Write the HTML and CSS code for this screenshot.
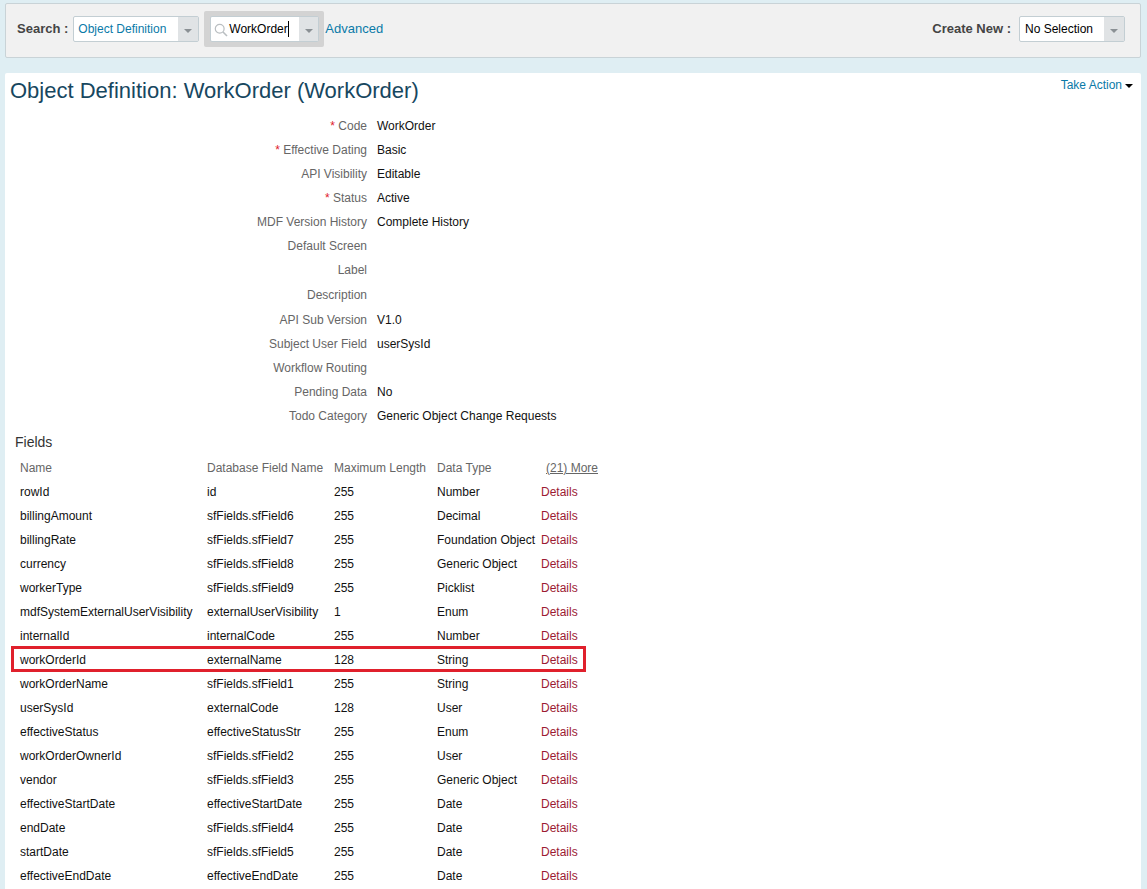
FILE: index.html
```html
<!DOCTYPE html>
<html lang="en">
<head>
<meta charset="utf-8">
<title>Object Definition: WorkOrder</title>
<link rel="stylesheet" href="styles.css">
</head>
<body>
<div class="topbar">
  <span class="bar-label">Search :</span>
  <div class="combo combo-type">
    <span class="combo-text link">Object Definition</span>
    <span class="combo-btn"><i class="caret"></i></span>
  </div>
  <div class="search-wrap">
    <div class="combo combo-search">
      <span class="combo-text search-text">
        <svg class="search-icon" width="14" height="14" viewBox="0 0 14 14"><circle cx="5.7" cy="5.7" r="4.4" fill="none" stroke="#b9bec1" stroke-width="1.2"/><path d="M9 9l4 4" stroke="#b9bec1" stroke-width="1.6" fill="none"/></svg>
        <span class="typed">WorkOrder</span>
      </span>
      <span class="combo-btn"><i class="caret"></i></span>
    </div>
  </div>
  <a class="advanced link">Advanced</a>
  <span class="bar-label create">Create New :</span>
  <div class="combo combo-new">
    <span class="combo-text">No Selection</span>
    <span class="combo-btn"><i class="caret"></i></span>
  </div>
</div>

<main class="panel">
  <div class="title-row">
    <h1>Object Definition: WorkOrder (WorkOrder)</h1>
    <a class="action link">Take Action<i class="action-caret"></i></a>
  </div>
  <dl class="props">
    <div class="prop"><dt><span class="req">*</span> Code</dt><dd>WorkOrder</dd></div>
    <div class="prop"><dt><span class="req">*</span> Effective Dating</dt><dd>Basic</dd></div>
    <div class="prop"><dt>API Visibility</dt><dd>Editable</dd></div>
    <div class="prop"><dt><span class="req">*</span> Status</dt><dd>Active</dd></div>
    <div class="prop"><dt>MDF Version History</dt><dd>Complete History</dd></div>
    <div class="prop"><dt>Default Screen</dt><dd></dd></div>
    <div class="prop"><dt>Label</dt><dd></dd></div>
    <div class="prop tall"><dt>Description</dt><dd></dd></div>
    <div class="prop tall"><dt>API Sub Version</dt><dd>V1.0</dd></div>
    <div class="prop"><dt>Subject User Field</dt><dd>userSysId</dd></div>
    <div class="prop"><dt>Workflow Routing</dt><dd></dd></div>
    <div class="prop"><dt>Pending Data</dt><dd>No</dd></div>
    <div class="prop"><dt>Todo Category</dt><dd>Generic Object Change Requests</dd></div>
  </dl>
  <h2>Fields</h2>
  <div class="fields">
    <div class="row head"><span>Name</span><span>Database Field Name</span><span>Maximum Length</span><span>Data Type</span><span class="more">(21) More</span></div>
    <div class="row"><span>rowId</span><span>id</span><span>255</span><span>Number</span><a class="details">Details</a></div>
    <div class="row"><span>billingAmount</span><span>sfFields.sfField6</span><span>255</span><span>Decimal</span><a class="details">Details</a></div>
    <div class="row"><span>billingRate</span><span>sfFields.sfField7</span><span>255</span><span>Foundation Object</span><a class="details">Details</a></div>
    <div class="row"><span>currency</span><span>sfFields.sfField8</span><span>255</span><span>Generic Object</span><a class="details">Details</a></div>
    <div class="row"><span>workerType</span><span>sfFields.sfField9</span><span>255</span><span>Picklist</span><a class="details">Details</a></div>
    <div class="row"><span>mdfSystemExternalUserVisibility</span><span>externalUserVisibility</span><span>1</span><span>Enum</span><a class="details">Details</a></div>
    <div class="row"><span>internalId</span><span>internalCode</span><span>255</span><span>Number</span><a class="details">Details</a></div>
    <div class="row marked"><span>workOrderId</span><span>externalName</span><span>128</span><span>String</span><a class="details">Details</a></div>
    <div class="row"><span>workOrderName</span><span>sfFields.sfField1</span><span>255</span><span>String</span><a class="details">Details</a></div>
    <div class="row"><span>userSysId</span><span>externalCode</span><span>128</span><span>User</span><a class="details">Details</a></div>
    <div class="row"><span>effectiveStatus</span><span>effectiveStatusStr</span><span>255</span><span>Enum</span><a class="details">Details</a></div>
    <div class="row"><span>workOrderOwnerId</span><span>sfFields.sfField2</span><span>255</span><span>User</span><a class="details">Details</a></div>
    <div class="row"><span>vendor</span><span>sfFields.sfField3</span><span>255</span><span>Generic Object</span><a class="details">Details</a></div>
    <div class="row"><span>effectiveStartDate</span><span>effectiveStartDate</span><span>255</span><span>Date</span><a class="details">Details</a></div>
    <div class="row"><span>endDate</span><span>sfFields.sfField4</span><span>255</span><span>Date</span><a class="details">Details</a></div>
    <div class="row"><span>startDate</span><span>sfFields.sfField5</span><span>255</span><span>Date</span><a class="details">Details</a></div>
    <div class="row"><span>effectiveEndDate</span><span>effectiveEndDate</span><span>255</span><span>Date</span><a class="details">Details</a></div>
  </div>
</main>
</body>
</html>
```
FILE: styles.css
```css
html, body { height: 100%; }
body {
  margin: 0;
  padding: 3px 6px 0 5px;
  box-sizing: border-box;
  height: 889px;
  overflow: hidden;
  background: #dfeef3;
  font: 12px/14px "Liberation Sans", Arial, sans-serif;
  color: #000;
}
.link { color: #0a7aa8; }

.topbar {
  display: flex;
  align-items: center;
  height: 55px;
  box-sizing: border-box;
  padding: 0 15px 3px 11px;
  background: #f1f1f1;
  border: 1px solid #c9d3d7;
  border-radius: 2px;
}
.bar-label { font-size: 13px; font-weight: bold; color: #444; margin-right: 5px; }
.create { margin-left: auto; margin-right: 8px; }
.combo {
  display: flex;
  height: 26px;
  box-sizing: border-box;
  background: #fff;
  border: 1px solid #c3ced3;
  border-radius: 2px;
}
.combo-text { flex: 1; display: flex; align-items: center; padding-left: 4px; white-space: nowrap; overflow: hidden; }
.combo-new .combo-text { padding-left: 5px; }
.combo-btn { width: 20px; background: #e0e3e5; display: flex; align-items: center; justify-content: center; }
.caret { display: block; width: 0; height: 0; margin-top: 3px; border: 4px solid transparent; border-top-color: #8a9094; border-bottom: 0; }
.combo-type { width: 126px; }
.search-wrap { background: #d3d3d3; border-radius: 2px; padding: 5px 5px 5px 6px; margin-left: 5px; }
.combo-search { width: 109px; height: 26px; }
.combo-search .combo-btn { width: 19px; }
.search-text { padding-left: 3px; }
.search-icon { flex: none; margin-right: 1px; margin-top: 1px; }
.typed { border-right: 1px solid #000; line-height: 16px; padding-right: 0; }
.advanced { font-size: 13px; margin-left: 1px; }
.combo-new { width: 106px; }

.panel {
  margin-top: 15px;
  height: 830px;
  background: #fff;
  border-radius: 2px 2px 0 0;
  padding: 0 6px;
}
.title-row { display: flex; justify-content: space-between; align-items: flex-start; height: 40px; }
h1 { margin: 5px 0 0 -1px; font-size: 22px; line-height: 26px; font-weight: normal; color: #17475f; }
.action { margin: 5px 2px 0 0; display: flex; align-items: center; }
.action-caret { width: 0; height: 0; margin-left: 3px; margin-top: 2px; border: 4px solid transparent; border-top-color: #000; border-bottom: 0; }

.props { margin: 1px 0 0; }
.prop { display: flex; height: 24px; align-items: center; }
.prop.tall { height: 25px; }
dt { width: 356px; text-align: right; color: #666; flex: none; }
dd { margin: 0 0 0 10px; color: #111; }
.req { color: #e0202c; }

h2 { margin: 2px 0 0 4px; height: 26px; font-size: 14px; line-height: 25px; font-weight: normal; color: #333; }
.fields { width: 575px; }
.row {
  position: relative;
  display: grid;
  grid-template-columns: 187px 127px 103px 104px 1fr;
  height: 24px;
  align-items: center;
  padding-left: 9px;
  color: #111;
  white-space: nowrap;
}
.head { color: #666; }
.more { color: #666; text-decoration: underline; margin-left: 5px; }
.details { color: #9c1a33; }
.marked::after {
  content: "";
  position: absolute;
  inset: 0;
  border: 3px solid #e0202c;
  margin: -2px 0 0 0;
}
```
